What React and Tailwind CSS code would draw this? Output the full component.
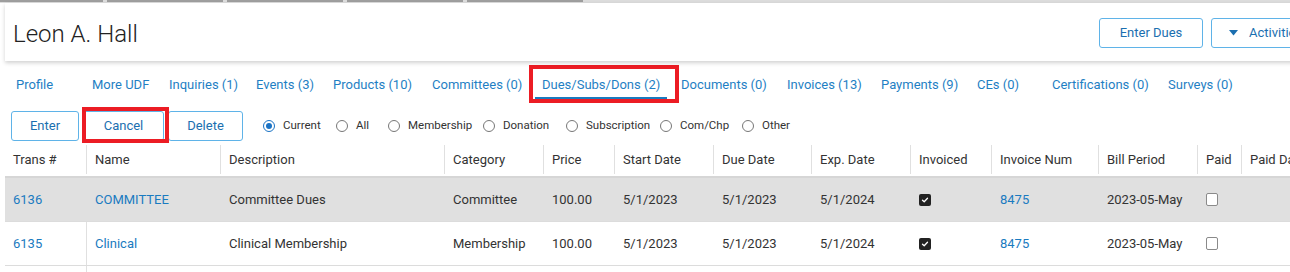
import React from 'react'

const tabs = [
  { label: 'Profile', w: 'w-[76px]' },
  { label: 'More UDF', w: 'w-[77px]' },
  { label: 'Inquiries (1)', w: 'w-[87px]' },
  { label: 'Events (3)', w: 'w-[77px]' },
  { label: 'Products (10)', w: 'w-[99px]' },
  { label: 'Committees (0)', w: 'w-[110px]' },
  { label: 'Dues/Subs/Dons (2)', w: 'w-[139px]', active: true },
  { label: 'Documents (0)', w: 'w-[106px]' },
  { label: 'Invoices (13)', w: 'w-[94px]' },
  { label: 'Payments (9)', w: 'w-[96px]' },
  { label: 'CEs (0)', w: 'w-[75px]' },
  { label: 'Certifications (0)', w: 'w-[116px]' },
  { label: 'Surveys (0)', w: 'w-[100px]' },
]

const radios = [
  { label: 'Current', w: 'w-[73px]', on: true },
  { label: 'All', w: 'w-[52px]' },
  { label: 'Membership', w: 'w-[95px]' },
  { label: 'Donation', w: 'w-[83px]' },
  { label: 'Subscription', w: 'w-[94px]' },
  { label: 'Com/Chp', w: 'w-[82px]' },
  { label: 'Other', w: 'w-[60px]' },
]

const heads = ['Trans #', 'Name', 'Description', 'Category', 'Price', 'Start Date', 'Due Date', 'Exp. Date', 'Invoiced', 'Invoice Num', 'Bill Period', 'Paid', 'Paid Date']

const rows = [
  { id: '6136', name: 'COMMITTEE', desc: 'Committee Dues', cat: 'Committee', selected: true },
  { id: '6135', name: 'Clinical', desc: 'Clinical Membership', cat: 'Membership' },
]

const grid = 'grid grid-cols-[82px_134px_224px_99px_71px_99px_98px_99px_81px_107px_99px_44px_120px]'

function Checked() {
  return (
    <span className="w-[12px] h-[12px] rounded-[2px] bg-[#222] flex items-center justify-center">
      <svg width="8" height="8" viewBox="0 0 8 8"><path d="M1.5 4.2 L3.2 5.8 L6.5 2.3" fill="none" stroke="#fff" strokeWidth="1.3" strokeLinecap="round" strokeLinejoin="round" /></svg>
    </span>
  )
}

function Unchecked() {
  return <span className="w-[12px] h-[13px] rounded-[2px] border border-[#8a8a8a] bg-white" />
}

export default function App() {
  return (
    <div className="w-[1290px] h-[272px] overflow-hidden bg-white font-['Roboto',sans-serif] text-[#333]">
      {/* top strip */}
      <div className="h-[3px] bg-[#dcdcdc] flex gap-[4px] items-start">
        <div className="w-[103px] h-[2px] bg-[#9e9e9e]" />
        <div className="w-[116px] h-[2px] bg-[#9e9e9e]" />
        <div className="w-[116px] h-[2px] bg-[#9e9e9e]" />
        <div className="w-[116px] h-[2px] bg-[#9e9e9e]" />
        <div className="w-[116px] h-[2px] bg-[#9e9e9e]" />
      </div>

      {/* header */}
      <div className="ml-[5px] w-[1336px] h-[58px] bg-white shadow-[0_2px_4px_rgba(0,0,0,0.18)] flex items-start relative z-10">
        <h1 className="pl-[8px] pt-[17px] text-[24px] leading-[28px] font-light text-[#222]">Leon A. Hall</h1>
        <div className="ml-auto mt-[15px] mr-[10px] flex gap-[8px]">
          <button className="w-[104px] h-[30px] rounded-[3px] border border-[#5fb3e8] text-[13px] text-[#1b6fb0]">Enter Dues</button>
          <button className="w-[120px] h-[30px] rounded-[3px] border border-[#5fb3e8] text-[13px] text-[#1b6fb0] flex items-center pl-[17px] gap-[11px]">
            <svg width="9" height="6" viewBox="0 0 9 6"><path d="M0 0 H9 L4.5 5.5 Z" fill="#1b6fb0" /></svg>
            Activities
          </button>
        </div>
      </div>

      {/* tabs */}
      <div className="pt-[11px] pl-[9px] flex">
        {tabs.map((t) => (
          <div key={t.label} className={`${t.w} shrink-0 relative`}>
            <span className={`inline-block px-[7px] pb-[2px] text-[13px] leading-[20px] text-[#1f7fc4] whitespace-nowrap border-b-2 ${t.active ? 'border-[#1a7abf]' : 'border-transparent'}`}>
              {t.label}
            </span>
            {t.active && <span className="absolute -left-[6px] -top-[7px] w-[150px] h-[38px] border-[4px] border-[#ec1c24]" />}
          </div>
        ))}
      </div>

      {/* actions + filters */}
      <div className="mt-[12px] h-[30px] flex items-center">
        <div className="ml-[11px] flex gap-[4px]">
          <button className="w-[68px] h-[30px] rounded-[3px] border border-[#5fb3e8] text-[13px] text-[#1b6fb0]">Enter</button>
          <div className="relative">
            <button className="w-[81px] h-[30px] rounded-[3px] border border-[#5fb3e8] text-[13px] text-[#1b6fb0]">Cancel</button>
            <span className="absolute -left-[1px] -top-[4px] w-[87px] h-[36px] border-[4px] border-[#ec1c24]" />
          </div>
          <button className="w-[75px] h-[30px] rounded-[3px] border border-[#5fb3e8] text-[13px] text-[#1b6fb0]">Delete</button>
        </div>
        <div className="ml-[20px] flex items-center">
          {radios.map((r) => (
            <label key={r.label} className={`${r.w} shrink-0 flex items-center gap-[8px] text-[11.5px] text-[#333]`}>
              <span className={`w-[12px] h-[12px] rounded-full border flex items-center justify-center ${r.on ? 'border-[#1a73c5]' : 'border-[#777]'}`}>
                {r.on && <span className="w-[6px] h-[6px] rounded-full bg-[#1a73c5]" />}
              </span>
              {r.label}
            </label>
          ))}
        </div>
      </div>

      {/* table */}
      <div className="mt-[2px] ml-[5px] text-[13px]">
        <div className={`${grid} h-[35px] border-b-2 border-[#d6d6d6]`}>
          {heads.map((h, i) => (
            <div key={h} className={`my-[2px] pl-[8px] flex items-center whitespace-nowrap text-[#333] ${i < heads.length - 1 ? 'border-r border-[#e0e0e0]' : ''}`}>
              {h}
            </div>
          ))}
        </div>
        {rows.map((r) => (
          <div key={r.id} className={`${grid} h-[44px] border-b border-[#dcdcdc] ${r.selected ? 'bg-[#e0e0e0]' : 'bg-white'}`}>
            <div className="pl-[8px] flex items-center text-[#1a7bc0] border-r border-[#e0e0e0]">{r.id}</div>
            <div className="pl-[8px] flex items-center text-[#1a7bc0]">{r.name}</div>
            <div className="pl-[8px] flex items-center">{r.desc}</div>
            <div className="pl-[8px] flex items-center">{r.cat}</div>
            <div className="pl-[8px] flex items-center">100.00</div>
            <div className="pl-[8px] flex items-center">5/1/2023</div>
            <div className="pl-[8px] flex items-center">5/1/2023</div>
            <div className="pl-[8px] flex items-center">5/1/2024</div>
            <div className="pl-[8px] flex items-center"><Checked /></div>
            <div className="pl-[8px] flex items-center text-[#1a7bc0]">8475</div>
            <div className="pl-[8px] flex items-center">2023-05-May</div>
            <div className="pl-[8px] flex items-center"><Unchecked /></div>
            <div className="pl-[8px] flex items-center" />
          </div>
        ))}
        <div className={`${grid} h-[44px]`}>
          <div className="border-r border-[#e0e0e0]" />
        </div>
      </div>
    </div>
  )
}
